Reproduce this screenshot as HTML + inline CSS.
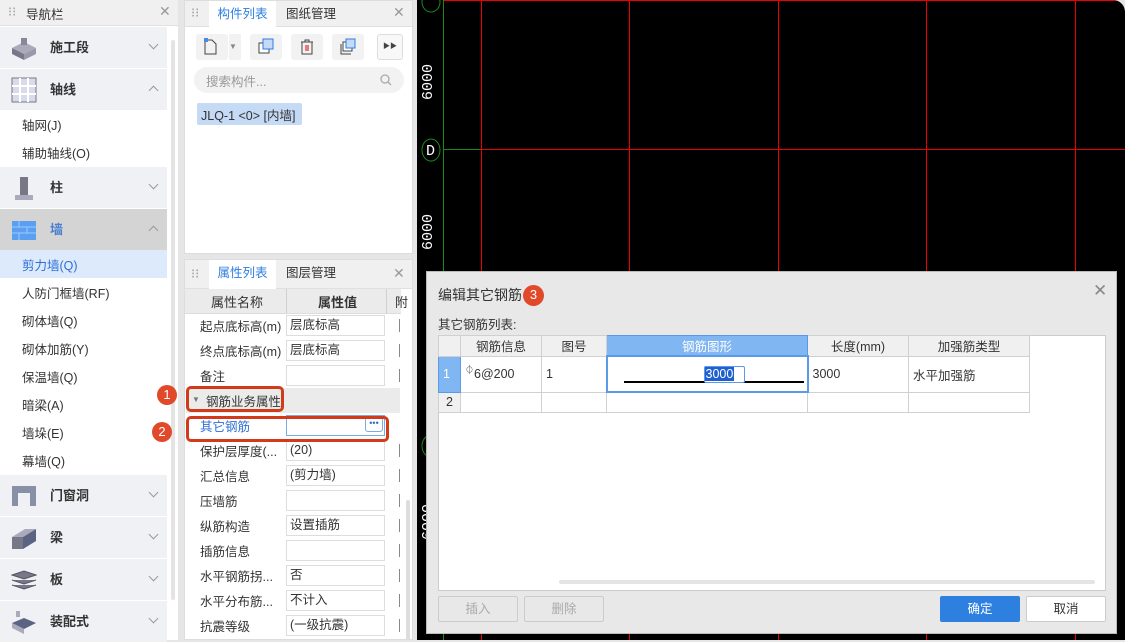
<!DOCTYPE html>
<html><head><meta charset="utf-8"><style>
*{box-sizing:border-box;margin:0;padding:0}
body{width:1125px;height:640px;overflow:hidden;background:#e6e6e6;font-family:"Liberation Sans","Noto Sans CJK SC",sans-serif;font-size:13px;color:#333;position:relative}
.a{position:absolute}
.nav{left:0;top:0;width:178px;height:640px;background:#fff}
.hd{height:26px;background:#f0f0f0;border-bottom:1px solid #e0e0e0}
.grp{position:absolute;left:0;width:167px;height:41px;background:#f0f1f5;font-weight:bold;font-size:13px;color:#333}
.grp span{position:absolute;left:50px;top:10px}
.grp i{position:absolute;left:150px;top:14px;width:7px;height:7px;border-right:1px solid #999;border-bottom:1px solid #999;transform:rotate(45deg)}
.grp i.up{transform:rotate(-135deg);top:18px}
.ic{position:absolute;left:11px;top:8px;width:26px;height:26px}
.it{position:absolute;left:22px;font-size:12.5px;color:#333}
.tab{position:absolute;top:0;height:26px;line-height:26px;font-size:12.5px}
.row{position:absolute;left:186px;width:214px;height:25px;font-size:12.5px}
.row .n{position:absolute;left:14px;top:3px}
.row .v{position:absolute;left:100px;top:2px;width:99px;height:21px;border:1px solid #ddd;background:#fff;padding:0 3px;line-height:19px}
.row .t{position:absolute;left:213px;top:6px;width:1px;height:13px;background:#888}
.dlg{left:426px;top:271px;width:691px;height:363px;background:#e8e8e8;border:1px solid #bbb}
table{border-collapse:collapse;position:absolute;left:11px;top:63px}
td{border:1px solid #d0d0d0;height:20px;font-size:12.5px;padding:0 4px;background:#fff}
th{border:1px solid #d0d0d0;height:20px;font-weight:normal;font-size:12.5px;background:#f0f0f0}
.btn{position:absolute;top:324px;height:26px;border:1px solid #ccc;text-align:center;line-height:24px;border-radius:2px;font-size:12.5px}
.cir{position:absolute;width:20px;height:20px;border-radius:50%;background:#e0492a;color:#fff;text-align:center;line-height:20px;font-size:13px}
</style></head><body>
<!-- canvas -->
<div class="a" style="left:417px;top:0;width:708px;height:640px;background:#000;border-top-right-radius:12px;overflow:hidden">
<svg width="708" height="640" style="position:absolute;left:0;top:0">
<g stroke="#e00" stroke-width="1">
<line x1="26" y1="0.5" x2="708" y2="0.5"/><line x1="64" y1="149.5" x2="708" y2="149.5"/>
<line x1="64.5" y1="0" x2="64.5" y2="640"/><line x1="212.5" y1="0" x2="212.5" y2="640"/><line x1="361.5" y1="0" x2="361.5" y2="640"/><line x1="509.5" y1="0" x2="509.5" y2="640"/><line x1="658.5" y1="0" x2="658.5" y2="640"/>
</g>
<g stroke="#1a8a1a" fill="none">
<line x1="26.5" y1="0" x2="26.5" y2="640"/><line x1="26" y1="149.5" x2="64" y2="149.5"/>
<ellipse cx="14" cy="150" rx="9" ry="11"/><ellipse cx="14" cy="2" rx="9" ry="10"/><ellipse cx="14" cy="446" rx="9" ry="11"/>
</g>
<g fill="#fff" font-size="15" font-family="Liberation Mono">
<text x="9" y="155">D</text>
<text transform="translate(15,100) rotate(-90)">6000</text>
<text transform="translate(15,250) rotate(-90)">6000</text>
<text transform="translate(15,540) rotate(-90)">6000</text>
</g>
</svg></div>

<!-- nav -->
<div class="a nav">
<div class="hd"><span class="a" style="left:8px;top:4px;color:#999">⁝⁝</span><span class="a" style="left:26px;top:4px;font-size:12.5px">导航栏</span><span class="a" style="left:159px;top:3px;color:#999;font-size:14px">✕</span></div>
<div class="a" style="left:171px;top:40px;width:4px;height:560px;background:#e4e4e4;border-radius:2px"></div>
<div class="grp" style="top:27px"><svg class="ic" viewBox="0 0 26 26"><path d="M1 13 L13 7 L25 13 L13 19Z" fill="#aab"/><path d="M1 13 L13 19 L13 25 L1 19Z" fill="#778"/><path d="M25 13 L13 19 L13 25 L25 19Z" fill="#99a"/><rect x="10" y="3" width="6" height="7" fill="#889"/></svg><span>施工段</span><i></i></div>
<div class="grp" style="top:69px"><svg class="ic" viewBox="0 0 26 26"><rect x="1" y="1" width="24" height="24" fill="#d8dcea" stroke="#778" /><path d="M9 1V25M17 1V25M1 9H25M1 17H25" stroke="#fff" stroke-width="2"/></svg><span>轴线</span><i class="up"></i></div>
<div class="it" style="top:115px">轴网(J)</div>
<div class="it" style="top:143px">辅助轴线(O)</div>
<div class="grp" style="top:167px"><svg class="ic" viewBox="0 0 26 26"><rect x="9" y="2" width="8" height="20" fill="#778"/><rect x="4" y="20" width="18" height="5" fill="#aab"/></svg><span>柱</span><i></i></div>
<div class="grp" style="top:209px;background:#d4d4d4"><svg class="ic" viewBox="0 0 26 26"><rect x="1" y="4" width="24" height="19" fill="#5a9ff0"/><path d="M1 10H25M1 16H25M8 4V10M16 10V16M8 16V23" stroke="#9cc8ff"/></svg><span style="color:#4a7fd0">墙</span><i class="up"></i></div>
<div class="a" style="left:0;top:250px;width:167px;height:28px;background:#ddeafb"></div>
<div class="it" style="top:255px;color:#2d6fd8">剪力墙(Q)</div>
<div class="it" style="top:283px">人防门框墙(RF)</div>
<div class="it" style="top:311px">砌体墙(Q)</div>
<div class="it" style="top:339px">砌体加筋(Y)</div>
<div class="it" style="top:367px">保温墙(Q)</div>
<div class="it" style="top:395px">暗梁(A)</div>
<div class="it" style="top:423px">墙垛(E)</div>
<div class="it" style="top:451px">幕墙(Q)</div>
<div class="grp" style="top:475px"><svg class="ic" viewBox="0 0 26 26"><path d="M1 3H25V23H19V10H7V23H1Z" fill="#8890a8"/></svg><span>门窗洞</span><i></i></div>
<div class="grp" style="top:517px"><svg class="ic" viewBox="0 0 26 26"><path d="M1 12L14 4H25L12 12Z" fill="#aab"/><path d="M1 12H12V24H1Z" fill="#778"/><path d="M12 12L25 4V16L12 24Z" fill="#5a6482"/></svg><span>梁</span><i></i></div>
<div class="grp" style="top:559px"><svg class="ic" viewBox="0 0 26 26"><path d="M1 8L13 4L25 8L13 12Z M1 13L13 17L25 13 M1 18L13 22L25 18" fill="#778" stroke="#556"/></svg><span>板</span><i></i></div>
<div class="grp" style="top:601px"><svg class="ic" viewBox="0 0 26 26"><path d="M1 14L13 9L25 14L13 20Z" fill="#5a6482"/><path d="M1 14V19L13 25V20Z" fill="#aab"/><rect x="5" y="2" width="4" height="6" fill="#aab"/></svg><span>装配式</span><i></i></div>
</div>

<!-- middle top -->
<div class="a" style="left:184px;top:0;width:229px;height:254px;background:#fff;border:1px solid #ddd">
<div class="hd" style="background:#f0f0f0"><span class="a" style="left:6px;top:4px;color:#999">⁝⁝</span>
<div class="tab" style="left:24px;width:67px;background:#fff;color:#2d7fe0;text-align:center">构件列表</div>
<div class="tab" style="left:101px">图纸管理</div><span class="a" style="left:208px;top:3px;color:#999;font-size:14px">✕</span></div>
<div class="a" style="left:11px;top:33px;width:32px;height:26px;background:#f2f2f2;border-radius:3px"><svg width="32" height="26"><path d="M9 6H16L20 10V20H9Z" fill="none" stroke="#444"/><rect x="8" y="4" width="4" height="4" fill="#4a8ae0"/></svg></div>
<div class="a" style="left:44px;top:33px;width:12px;height:26px;background:#f2f2f2;color:#888;font-size:8px;line-height:26px">▼</div>
<div class="a" style="left:65px;top:33px;width:32px;height:26px;background:#f2f2f2;border-radius:3px"><svg width="32" height="26"><rect x="9" y="9" width="10" height="10" fill="#fff" stroke="#444"/><rect x="13" y="5" width="10" height="10" fill="#c4daf7" stroke="#2d7fe0"/></svg></div>
<div class="a" style="left:106px;top:33px;width:32px;height:26px;background:#f2f2f2;border-radius:3px"><svg width="32" height="26"><path d="M10 8H22M14 8V6H18V8M11 8V20H21V8" fill="none" stroke="#444"/><path d="M15 11V17M17 11V17" stroke="#d00"/></svg></div>
<div class="a" style="left:147px;top:33px;width:32px;height:26px;background:#f2f2f2;border-radius:3px"><svg width="32" height="26"><path d="M9 10V20H19" fill="none" stroke="#444"/><rect x="11" y="8" width="9" height="9" fill="#fff" stroke="#444"/><rect x="14" y="5" width="9" height="9" fill="#c4daf7" stroke="#2d7fe0"/></svg></div>
<div class="a" style="left:192px;top:33px;width:26px;height:26px;border:1px solid #ddd;border-radius:3px;background:#f8f8f8;text-align:center;line-height:24px;font-size:7px;color:#444">▶▶</div>
<div class="a" style="left:9px;top:66px;width:210px;height:26px;background:#f2f2f2;border-radius:13px;color:#999;padding:4px 12px;font-size:12.5px">搜索构件...<svg class="a" style="right:12px;top:7px" width="12" height="12"><circle cx="5" cy="5" r="4" fill="none" stroke="#aaa" stroke-width="1.3"/><path d="M8 8L11 11" stroke="#aaa" stroke-width="1.3"/></svg></div>
<div class="a" style="left:12px;top:102px;width:105px;height:22px;background:#c4daf5;border-radius:2px;padding:2px 4px;font-size:12.5px">JLQ-1 &lt;0&gt; [内墙]</div>
</div>

<!-- middle bottom -->
<div class="a" style="left:184px;top:259px;width:229px;height:381px;background:#fff;border:1px solid #ddd">
<div class="hd" style="height:29px;background:#f0f0f0"><span class="a" style="left:6px;top:6px;color:#999">⁝⁝</span>
<div class="tab" style="left:24px;width:67px;height:29px;line-height:27px;background:#fff;color:#2d7fe0;text-align:center">属性列表</div>
<div class="tab" style="left:101px;line-height:27px">图层管理</div><span class="a" style="left:208px;top:5px;color:#999;font-size:14px">✕</span></div>
<div class="a" style="left:0;top:29px;width:216px;height:25px;background:#ebebeb;border-bottom:1px solid #ddd">
<span class="a" style="left:26px;top:3px">属性名称</span><span class="a" style="left:101px;top:0;width:1px;height:25px;background:#d0d0d0"></span>
<span class="a" style="left:133px;top:3px;font-weight:bold">属性值</span><span class="a" style="left:201px;top:0;width:1px;height:25px;background:#d0d0d0"></span><span class="a" style="left:210px;top:3px">附</span></div>
<div class="a" style="left:221px;top:240px;width:4px;height:140px;background:#ddd;border-radius:2px"></div>
</div>
<div class="row" style="top:313px"><span class="n">起点底标高(m)</span><span class="v">层底标高</span><span class="t"></span></div>
<div class="row" style="top:338px"><span class="n">终点底标高(m)</span><span class="v">层底标高</span><span class="t"></span></div>
<div class="row" style="top:363px"><span class="n">备注</span><span class="v"></span><span class="t"></span></div>
<div class="row" style="top:388px;background:#ebebeb"><span class="n" style="left:6px;font-size:8px;top:7px;color:#777">▼</span><span class="n" style="left:20px">钢筋业务属性</span></div>
<div class="row" style="top:413px"><span class="n" style="color:#2d6fd8">其它钢筋</span><span class="v" style="border-color:#7aaae8"><span class="a" style="right:1px;top:1px;width:18px;height:15px;border:1px solid #7aaae8;border-radius:3px;font-size:9px;text-align:center;line-height:10px;color:#2d6fd8">•••</span></span></div>
<div class="row" style="top:438px"><span class="n">保护层厚度(...</span><span class="v">(20)</span><span class="t"></span></div>
<div class="row" style="top:463px"><span class="n">汇总信息</span><span class="v">(剪力墙)</span><span class="t"></span></div>
<div class="row" style="top:488px"><span class="n">压墙筋</span><span class="v"></span><span class="t"></span></div>
<div class="row" style="top:513px"><span class="n">纵筋构造</span><span class="v">设置插筋</span><span class="t"></span></div>
<div class="row" style="top:538px"><span class="n">插筋信息</span><span class="v"></span><span class="t"></span></div>
<div class="row" style="top:563px"><span class="n">水平钢筋拐...</span><span class="v">否</span><span class="t"></span></div>
<div class="row" style="top:588px"><span class="n">水平分布筋...</span><span class="v">不计入</span><span class="t"></span></div>
<div class="row" style="top:613px"><span class="n">抗震等级</span><span class="v">(一级抗震)</span><span class="t"></span></div>

<!-- annotations -->
<div class="a" style="left:186px;top:386px;width:98px;height:26px;border:3px solid #d23a1a;border-radius:5px"></div>
<div class="a" style="left:186px;top:416px;width:203px;height:26px;border:3px solid #d23a1a;border-radius:5px"></div>
<div class="cir" style="left:157px;top:385px">1</div>
<div class="cir" style="left:152px;top:422px">2</div>

<!-- dialog -->
<div class="a dlg">
<div class="a" style="left:11px;top:13px;font-size:14px">编辑其它钢筋</div>
<div class="cir" style="left:96px;top:13px;width:21px;height:21px">3</div>
<div class="a" style="left:666px;top:9px;color:#888;font-size:17px">✕</div>
<div class="a" style="left:11px;top:42px;font-size:12.5px">其它钢筋列表:</div>
<div class="a" style="left:11px;top:63px;width:668px;height:256px;background:#fff;border:1px solid #ccc"></div>
<div class="a" style="left:132px;top:308px;width:536px;height:4px;background:#e4e4e4;border-radius:2px"></div>
<table>
<tr><th style="width:22px"></th><th style="width:81px">钢筋信息</th><th style="width:65px">图号</th><th style="width:201px;background:#80b6f2;color:#fff;border-color:#5a9ae8">钢筋图形</th><th style="width:101px">长度(mm)</th><th style="width:121px">加强筋类型</th></tr>
<tr style="height:36px"><td style="background:#80b6f2;color:#fff;border-color:#5a9ae8">1</td><td style="vertical-align:top;padding-top:6px"><sup style="font-size:9px">⏀</sup>6@200</td><td>1</td><td style="position:relative;border:2px solid #5a9ae8"><div class="a" style="left:16px;top:24px;width:180px;height:2px;background:#000"></div><div class="a" style="left:96px;top:9px;width:41px;height:17px;border:1px solid #5a9ae8;border-radius:2px;background:#fff"><span style="background:#1f5fd0;color:#fff;padding:0 1px">3000</span></div></td><td>3000</td><td>水平加强筋</td></tr>
<tr><td style="background:#f0f0f0;text-align:center">2</td><td></td><td></td><td></td><td></td><td></td></tr>
</table>
<div class="btn" style="left:11px;width:80px;color:#aaa;background:#e8e8e8">插入</div>
<div class="btn" style="left:97px;width:80px;color:#aaa;background:#e8e8e8">删除</div>
<div class="btn" style="left:513px;width:80px;background:#2d7fe0;border-color:#2d7fe0;color:#fff">确定</div>
<div class="btn" style="left:599px;width:80px;background:#fff">取消</div>
</div>
</body></html>
